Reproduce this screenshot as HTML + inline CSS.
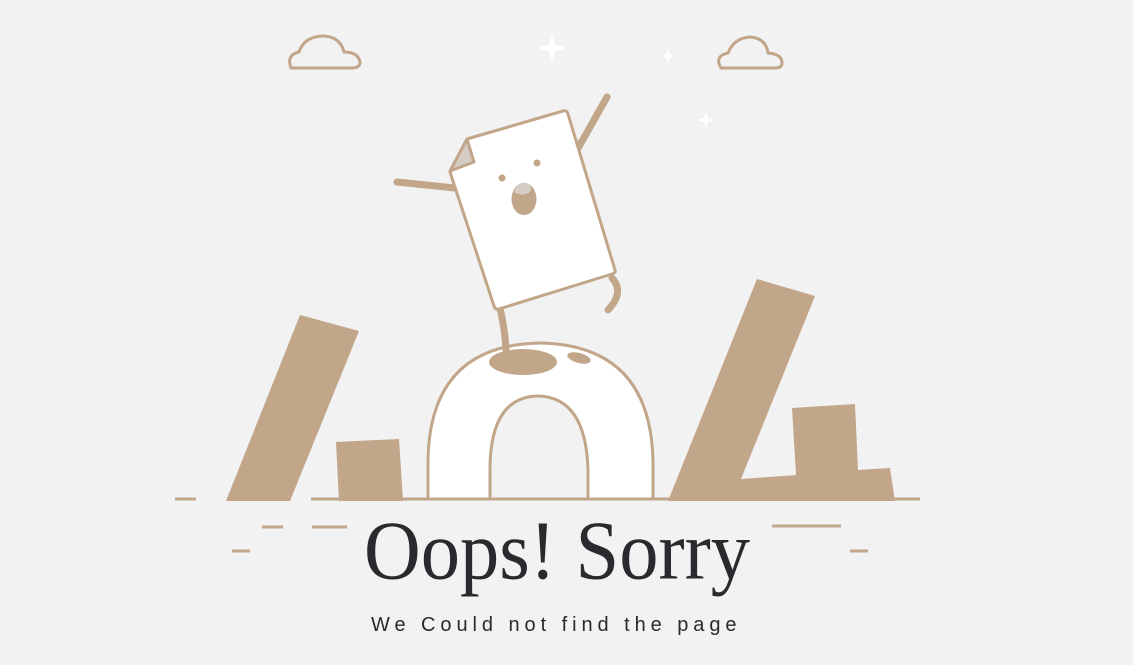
<!DOCTYPE html>
<html><head><meta charset="utf-8"><style>
html,body{margin:0;padding:0;background:#f2f2f2;width:1133px;height:665px;overflow:hidden}
svg{display:block}
</style></head><body>
<svg width="1133" height="665" viewBox="0 0 1133 665" xmlns="http://www.w3.org/2000/svg">
<rect width="1133" height="665" fill="#f2f2f2"/>
<g fill="none" stroke="#c2a68a" stroke-width="3" stroke-linejoin="round">
<path d="M291 68 Q286 55 299 52 Q304 37 322 36 Q340 36 344 52 Q358 52 360 62 Q360 68 352 68 Z"/>
<path d="M721 68 Q714 56 728 53 Q734 38 750 37 Q766 38 768 53 Q782 54 782 63 Q782 68 775 68 Z"/>
</g>
<g fill="#fff">
<path d="M552 34 L555 45 L566 48 L555 51 L552 62 L549 51 L538 48 L549 45 Z"/>
<path d="M668 49 L670 54 L675 56 L670 58 L668 63 L666 58 L661 56 L666 54 Z"/>
<path d="M706 111 L708 118 L715 120 L708 122 L706 129 L704 122 L697 120 L704 118 Z"/>
</g>
<g fill="#c2a68a">
<polygon points="300,315 359,331 290,501 226,501"/>
<polygon points="336,442 399,439 403,501 339,501"/>
<polygon points="757,279 815,296 741,479 796,475 792,408 855,404 858,470 890,468 895,501 668,501"/>
</g>
<g stroke="#c2a68a" stroke-width="3">
<line x1="311" y1="499" x2="920" y2="499"/>
<line x1="175" y1="499" x2="196" y2="499"/>
<line x1="897" y1="499" x2="920" y2="499"/>
<line x1="262" y1="527" x2="283" y2="527"/>
<line x1="312" y1="527" x2="347" y2="527"/>
<line x1="772" y1="526" x2="841" y2="526"/>
<line x1="232" y1="551" x2="250" y2="551"/>
<line x1="850" y1="551" x2="868" y2="551"/>
</g>
<path d="M428 499 L428 460 Q430 345 540 343 Q650 345 653 460 L653 499 Z M490 499 L490 470 Q490 396 539 396 Q586 398 588 470 L588 499 Z" fill="#fff" fill-rule="evenodd" stroke="#c2a68a" stroke-width="3"/>
<ellipse cx="523" cy="362" rx="34" ry="13" fill="#c2a68a"/>
<ellipse cx="579" cy="358" rx="12" ry="5" transform="rotate(15 579 358)" fill="#c2a68a"/>
<g fill="none" stroke="#c2a68a" stroke-width="7" stroke-linecap="round">
<path d="M397 182 L455 188"/>
<path d="M577 150 L607 97"/>
<path d="M500 308 Q505 330 506 350"/>
<path d="M612 278 Q625 292 608 310"/>
</g>
<path d="M467 139 L563 111 Q567 110 568 114 L615 270 Q616 273 612 274 L499 309 Q495 310 494 306 L450 172 Z" fill="#fff" stroke="#c2a68a" stroke-width="3" stroke-linejoin="round"/>
<path d="M467 139 L474 162 L450 171 Z" fill="#d5ccc4" stroke="#c2a68a" stroke-width="3" stroke-linejoin="round"/>
<circle cx="502" cy="178" r="3.5" fill="#c2a68a"/>
<circle cx="537" cy="163" r="3.5" fill="#c2a68a"/>
<ellipse cx="524" cy="199" rx="12.5" ry="16" fill="#c2a68a"/>
<path d="M514 192 Q518 181 526 183 Q533 185 530 192 Q522 197 514 192 Z" fill="#d5ccc4"/>
<text x="364" y="578" textLength="386" lengthAdjust="spacingAndGlyphs" font-family="Liberation Serif, serif" font-size="78" fill="#2a2a2e" transform="translate(0,-40) scale(1,1.07)">Oops! Sorry</text>
<text x="371" y="631" textLength="368" lengthAdjust="spacing" font-family="Liberation Sans, sans-serif" font-size="20" fill="#2a2a2e" letter-spacing="2.5">We Could not find the page</text>
</svg>
</body></html>
